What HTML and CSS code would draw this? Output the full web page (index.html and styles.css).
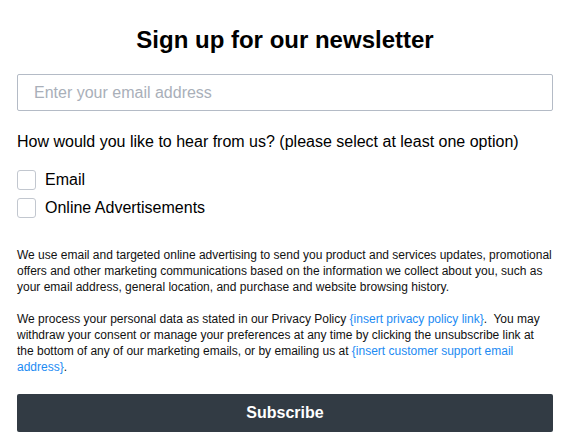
FILE: index.html
```html
<!DOCTYPE html>
<html>
<head>
<meta charset="utf-8">
<link rel="stylesheet" href="styles.css">
</head>
<body>
<form class="signup">
  <h1 class="title">Sign up for our newsletter</h1>
  <input class="email-input" type="email" placeholder="Enter your email address">
  <p class="question">How would you like to hear from us? (please select at least one option)</p>
  <div class="options">
    <label class="option"><span class="box"></span>Email</label>
    <label class="option"><span class="box"></span>Online Advertisements</label>
  </div>
  <p class="legal">We use email and targeted online advertising to send you product and services updates, promotional offers and other marketing communications based on the information we collect about you, such as your email address, general location, and purchase and website browsing history.</p>
  <p class="legal">We process your personal data as stated in our Privacy Policy <a class="link" href="#">{insert privacy policy link}</a>.&nbsp; You may withdraw your consent or manage your preferences at any time by clicking the unsubscribe link at the bottom of any of our marketing emails, or by emailing us at <a class="link" href="#">{insert customer support email address}</a>.</p>
  <button class="subscribe" type="button">Subscribe</button>
</form>
</body>
</html>
```
FILE: styles.css
```css
html, body {
  margin: 0;
  padding: 0;
  background: #fff;
}
body {
  font-family: "Liberation Sans", Arial, sans-serif;
  color: #000;
}
.signup {
  display: flex;
  flex-direction: column;
  padding: 26px 17px 0 17px;
}
.title {
  margin: 0;
  font-size: 24px;
  line-height: 28px;
  font-weight: bold;
  text-align: center;
}
.email-input {
  margin-top: 20px;
  height: 37px;
  box-sizing: border-box;
  border: 1px solid #b4bbc6;
  border-radius: 2px;
  padding: 0 16px;
  font-family: "Liberation Sans", Arial, sans-serif;
  font-size: 16px;
  color: #000;
  outline: none;
}
.email-input::placeholder {
  color: #a9afb9;
}
.question {
  margin: 21px 0 0 0;
  font-size: 16px;
  line-height: 20px;
}
.options {
  display: flex;
  flex-direction: column;
  gap: 8px;
  margin-top: 18px;
}
.option {
  display: flex;
  align-items: center;
  gap: 9px;
  font-size: 16px;
  line-height: 20px;
}
.box {
  width: 17px;
  height: 18px;
  border: 1px solid #c2c7cf;
  border-radius: 3px;
  background: #fff;
}
.legal {
  margin: 0;
  font-size: 12px;
  line-height: 16px;
  color: #111;
}
.options + .legal {
  margin-top: 29px;
}
.legal + .legal {
  margin-top: 16px;
}
.link {
  color: #1c8bf3;
  text-decoration: none;
}
.subscribe {
  margin-top: 19px;
  height: 38px;
  border: none;
  border-radius: 2px;
  background: #323b44;
  color: #fff;
  font-family: "Liberation Sans", Arial, sans-serif;
  font-size: 16px;
  font-weight: bold;
}
```
